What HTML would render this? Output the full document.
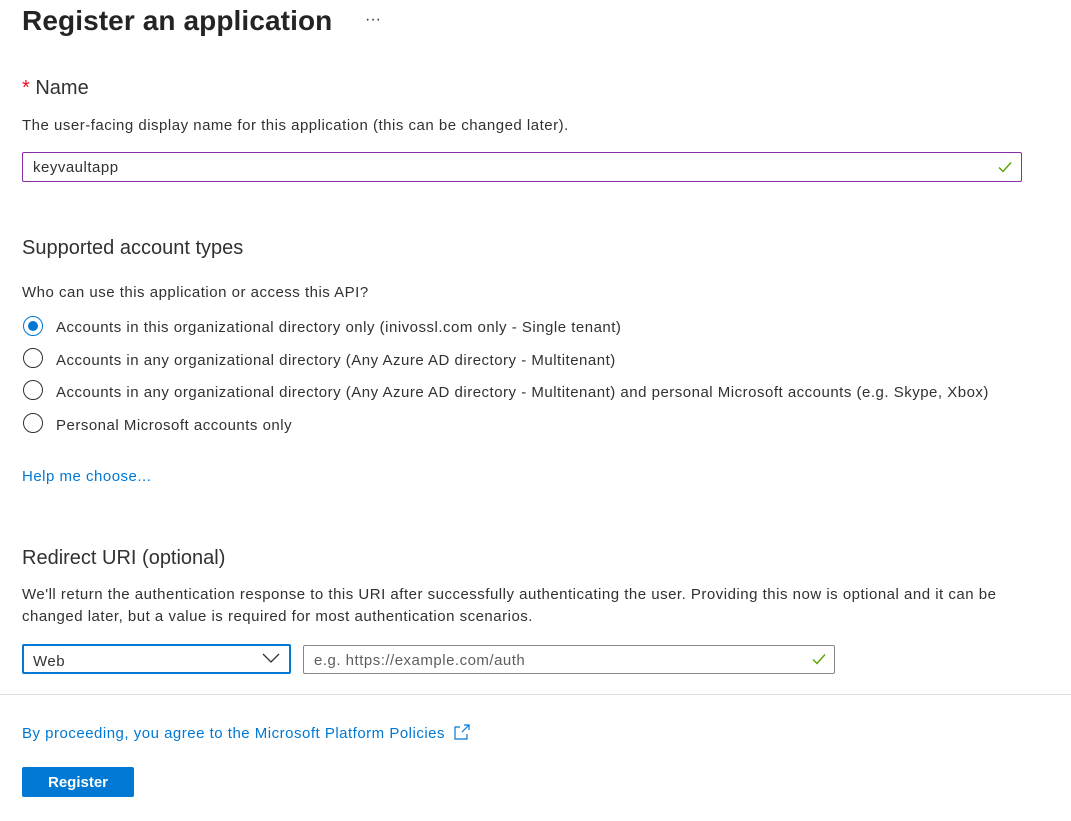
<!DOCTYPE html>
<html><head><style>
body{margin:0;width:1071px;height:821px;background:#fff;font-family:"Liberation Sans",sans-serif;color:#323130;position:relative;overflow:hidden}
.a{position:absolute;white-space:nowrap}
.t{font-size:15px;letter-spacing:0.5px}
.h{font-size:20px}
.radio{position:absolute;left:23px;width:20px;height:20px;border:1px solid #323130;border-radius:50%;box-sizing:border-box}
.lnk{color:#0078d4}
</style></head><body>
<div class="a" style="left:22px;top:5px;font-size:28px;font-weight:600;color:#252423;letter-spacing:0.1px">Register an application</div>
<div class="a" style="left:365px;top:11px;font-size:16px">···</div>
<div class="a h" style="left:22px;top:77px"><span style="color:#e81123">*</span> Name</div>
<div class="a t" style="left:22px;top:117px">The user-facing display name for this application (this can be changed later).</div>
<div class="a" style="left:22px;top:152px;width:1000px;height:30px;border:1px solid #8a2da5;border-radius:2px;box-sizing:border-box"></div>
<div class="a t" style="left:33px;top:159px">keyvaultapp</div>
<svg class="a" style="left:997px;top:159px" width="16" height="16"><path d="M2 8.5l4 4 8-9" stroke="#57a300" stroke-width="1.4" fill="none"/></svg>
<div class="a h" style="left:22px;top:237px">Supported account types</div>
<div class="a t" style="left:22px;top:284px">Who can use this application or access this API?</div>
<div class="radio" style="top:316px;border-color:#0078d4"><div style="position:absolute;left:4px;top:4px;width:10px;height:10px;border-radius:50%;background:#0078d4"></div></div>
<div class="a t" style="left:56px;top:319px">Accounts in this organizational directory only (inivossl.com only - Single tenant)</div>
<div class="radio" style="top:348px"></div>
<div class="a t" style="left:56px;top:352px">Accounts in any organizational directory (Any Azure AD directory - Multitenant)</div>
<div class="radio" style="top:380px"></div>
<div class="a t" style="left:56px;top:384px">Accounts in any organizational directory (Any Azure AD directory - Multitenant) and personal Microsoft accounts (e.g. Skype, Xbox)</div>
<div class="radio" style="top:413px"></div>
<div class="a t" style="left:56px;top:417px">Personal Microsoft accounts only</div>
<div class="a t lnk" style="left:22px;top:468px">Help me choose...</div>
<div class="a h" style="left:22px;top:547px">Redirect URI (optional)</div>
<div class="a t" style="left:22px;top:586px">We'll return the authentication response to this URI after successfully authenticating the user. Providing this now is optional and it can be</div>
<div class="a t" style="left:22px;top:608px">changed later, but a value is required for most authentication scenarios.</div>
<div class="a" style="left:22px;top:644px;width:269px;height:30px;border:2px solid #0078d4;border-radius:2px;box-sizing:border-box"></div>
<div class="a t" style="left:33px;top:653px">Web</div>
<svg class="a" style="left:262px;top:652px" width="18" height="12"><path d="M1 2l8 8 8-8" stroke="#323130" stroke-width="1.3" fill="none"/></svg>
<div class="a" style="left:303px;top:645px;width:532px;height:29px;border:1px solid #8a8886;border-radius:2px;box-sizing:border-box"></div>
<div class="a t" style="left:314px;top:652px;color:#605e5c">e.g. https://example.com/auth</div>
<svg class="a" style="left:811px;top:651px" width="16" height="16"><path d="M2 8.5l4 4 8-9" stroke="#57a300" stroke-width="1.4" fill="none"/></svg>
<div class="a" style="left:0;top:694px;width:1071px;height:1px;background:#e1dfdd"></div>
<div class="a t lnk" style="left:22px;top:725px">By proceeding, you agree to the Microsoft Platform Policies</div>
<svg class="a" style="left:453px;top:724px" width="17" height="17"><path d="M7 3H2v12h12v-5M9 8l7-7M11 1h5v5" stroke="#0078d4" stroke-width="1.2" fill="none"/></svg>
<div class="a" style="left:22px;top:767px;width:112px;height:30px;background:#0078d4;border-radius:2px;color:#fff;font-weight:700;font-size:15px;text-align:center;line-height:31px">Register</div>
</body></html>
